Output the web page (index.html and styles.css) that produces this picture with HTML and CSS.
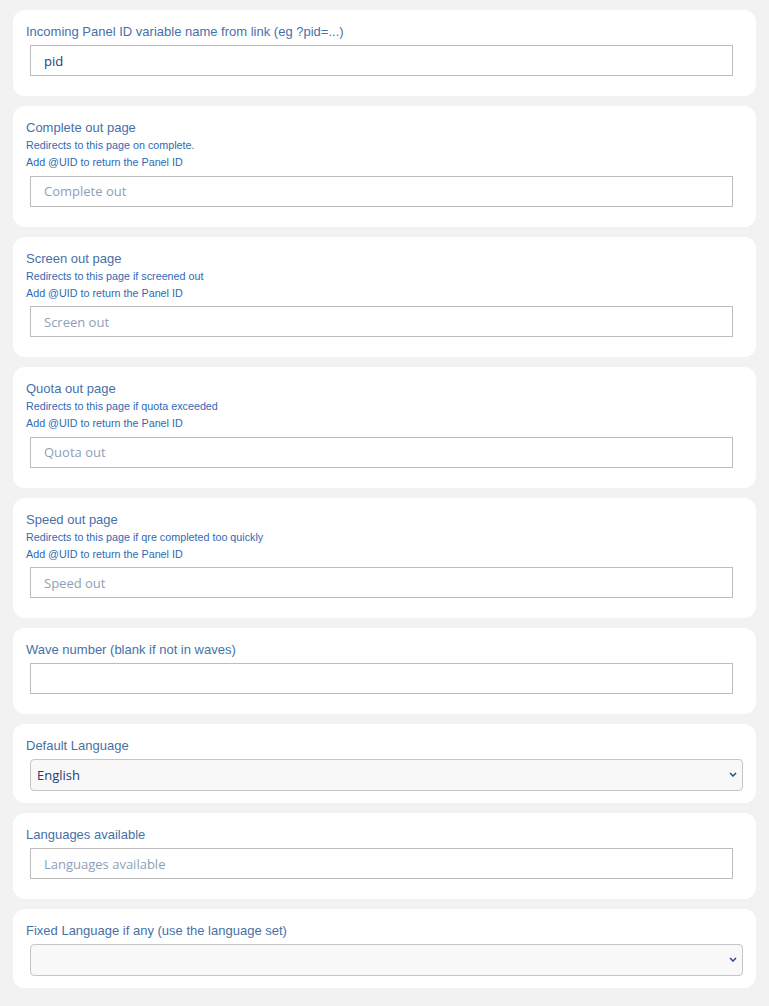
FILE: index.html
```html
<!DOCTYPE html>
<html lang="en">
<head>
<meta charset="utf-8">
<title>Panel settings</title>
<link rel="stylesheet" href="styles.css">
</head>
<body>
<div class="stack">
  <div class="card">
    <div class="label">Incoming Panel ID variable name from link (eg ?pid=...)</div>
    <input class="field" type="text" value="pid">
  </div>
  <div class="card">
    <div class="label">Complete out page</div>
    <div class="sub">Redirects to this page on complete.</div>
    <div class="sub">Add @UID to return the Panel ID</div>
    <input class="field" type="text" placeholder="Complete out">
  </div>
  <div class="card">
    <div class="label">Screen out page</div>
    <div class="sub">Redirects to this page if screened out</div>
    <div class="sub">Add @UID to return the Panel ID</div>
    <input class="field" type="text" placeholder="Screen out">
  </div>
  <div class="card">
    <div class="label">Quota out page</div>
    <div class="sub">Redirects to this page if quota exceeded</div>
    <div class="sub">Add @UID to return the Panel ID</div>
    <input class="field" type="text" placeholder="Quota out">
  </div>
  <div class="card">
    <div class="label">Speed out page</div>
    <div class="sub">Redirects to this page if qre completed too quickly</div>
    <div class="sub">Add @UID to return the Panel ID</div>
    <input class="field" type="text" placeholder="Speed out">
  </div>
  <div class="card">
    <div class="label">Wave number (blank if not in waves)</div>
    <input class="field" type="text">
  </div>
  <div class="card card-select">
    <div class="label">Default Language</div>
    <div class="select-wrap">
      <select class="select"><option>English</option></select>
      <svg class="chev" width="8" height="5" viewBox="0 0 8 5"><path d="M1 1 L4 4 L7 1" fill="none" stroke="#2a4a86" stroke-width="1.5"/></svg>
    </div>
  </div>
  <div class="card">
    <div class="label">Languages available</div>
    <input class="field" type="text" placeholder="Languages available">
  </div>
  <div class="card card-select">
    <div class="label">Fixed Language if any (use the language set)</div>
    <div class="select-wrap">
      <select class="select"><option></option></select>
      <svg class="chev" width="8" height="5" viewBox="0 0 8 5"><path d="M1 1 L4 4 L7 1" fill="none" stroke="#2a4a86" stroke-width="1.5"/></svg>
    </div>
  </div>
</div>
</body>
</html>
```

FILE: styles.css
```css
html, body {
  background: #f2f2f2;
}
body {
  margin: 10px 13px;
  font-family: "Liberation Sans", Arial, sans-serif;
}
.stack {
  display: flex;
  flex-direction: column;
  gap: 10px;
}
.card {
  background: #ffffff;
  border-radius: 12px;
  padding: 13px 13px 20px 13px;
  display: flex;
  flex-direction: column;
}
.card-select {
  padding-bottom: 12px;
}
.label {
  font-size: 13px;
  line-height: 18px;
  color: #4671a8;
}
.sub {
  font-size: 10.75px;
  line-height: 17.25px;
  color: #2f6ab4;
}
.field {
  box-sizing: border-box;
  margin: 4px 0 0 4px;
  width: calc(100% - 14px);
  height: 31px;
  border: 1px solid #bdbdbd;
  border-radius: 0;
  padding: 0 13px;
  font-family: "Open Sans", "Noto Sans", sans-serif;
  font-size: 13px;
  color: #1e3b78;
  background: #ffffff;
  outline: none;
}
.field::placeholder {
  color: #8d9fb8;
}
.select-wrap {
  position: relative;
  margin: 4px 0 0 4px;
  width: calc(100% - 4px);
}
.select {
  box-sizing: border-box;
  display: block;
  width: 100%;
  height: 32px;
  appearance: none;
  -webkit-appearance: none;
  border: 1px solid #c6c6c6;
  border-radius: 4px;
  background: #f8f8f8;
  padding: 0 24px 0 6px;
  font-family: "Open Sans", "Noto Sans", sans-serif;
  font-size: 13px;
  color: #1e3b78;
  outline: none;
}
.chev {
  position: absolute;
  right: 6px;
  top: 13px;
  pointer-events: none;
}
```
